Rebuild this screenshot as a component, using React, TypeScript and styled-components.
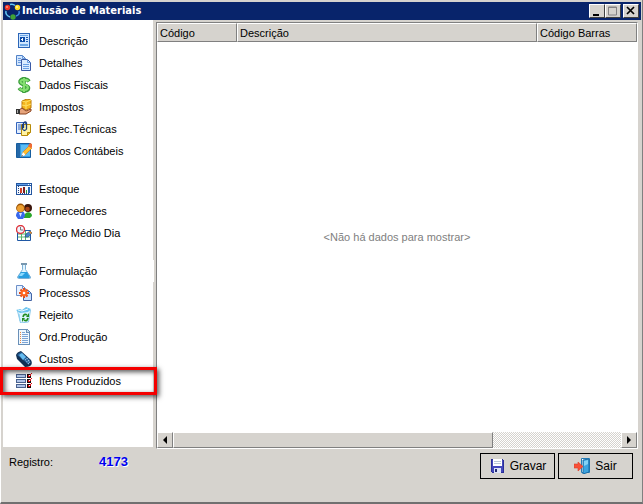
import React from "react";
import styled, { createGlobalStyle } from "styled-components";

const face = "#d6d3ce";

const GlobalStyle = createGlobalStyle`
  * { box-sizing: border-box; }
  html, body, #root { height: 100%; }
  body {
    margin: 0;
    background: ${face};
    color: #000;
    font: 11px/16px "Liberation Sans", Arial, sans-serif;
  }
`;

const Window = styled.div`
  display: flex;
  flex-direction: column;
  min-height: 100%;
  padding: 2px 1px 3px 2px;
  background: ${face};
  border-left: 1px solid #fff;
  border-right: 1px solid #808080;
  border-bottom: 2px solid #707070;
`;

const TitleBar = styled.header`
  display: flex;
  align-items: center;
  height: 18px;
  padding: 0 2px 0 1px;
  background: #08246b;
  color: #fff;
`;

const Title = styled.h1`
  flex: 1;
  margin: 0 0 0 1px;
  font: bold 11px/16px "DejaVu Sans Condensed", "DejaVu Sans", sans-serif;
`;

const WindowButton = styled.button<{ $apart?: boolean }>`
  display: flex;
  width: 16px;
  height: 14px;
  padding: 0;
  margin-left: ${(p) => (p.$apart ? 2 : 0)}px;
  align-items: center;
  justify-content: center;
  background: ${face};
  border: 1px solid;
  border-color: #fff #404040 #404040 #fff;
`;

const Body = styled.main`
  flex: 1;
  display: flex;
  gap: 3px;
  padding-right: 3px;
`;

const Sidebar = styled.nav`
  flex: 0 0 150px;
  margin-bottom: 2px;
  padding-top: 10px;
  background: #fff;
`;

const Group = styled.ul`
  list-style: none;
  margin: 0 0 16px;
  padding: 0;
`;

const Item = styled.li<{ $marked?: boolean; $edge?: boolean }>`
  position: relative;
  height: 22px;
  box-shadow: ${(p) => (p.$edge ? "1px 0 #fff" : "none")};
  ${(p) =>
    p.$marked &&
    `&::after {
      content: "";
      position: absolute;
      inset: -3px -4px -3px -3px;
      border: 3px solid #f40000;
      box-shadow: 2px 2px 5px #000a, inset 2px 2px 5px #000a;
      pointer-events: none;
    }`}
`;

const ItemLink = styled.a`
  display: flex;
  align-items: center;
  height: 22px;
  gap: 7px;
  padding-left: 13px;
  color: #000;
  text-decoration: none;
  white-space: nowrap;
`;

const Grid = styled.section`
  flex: 1;
  min-width: 0;
  display: flex;
  flex-direction: column;
  margin-top: 2px;
  background: #fff;
  border: 1px solid;
  border-color: #808080 #fff #fff #808080;
`;

const Table = styled.table`
  width: 100%;
  table-layout: fixed;
  border-collapse: separate;
  border-spacing: 0;
`;

const HeadCell = styled.th<{ $width?: number }>`
  width: ${(p) => (p.$width ? `${p.$width}px` : "auto")};
  height: 19px;
  padding: 1px 2px 0;
  background: ${face};
  border: 1px solid;
  border-color: #fff #808080 #808080 #fff;
  font-weight: normal;
  text-align: left;
  white-space: nowrap;
`;

const Empty = styled.p`
  flex: 1;
  display: flex;
  align-items: center;
  justify-content: center;
  margin: 0;
  color: #808080;
`;

const ScrollBar = styled.div`
  display: flex;
  height: 16px;
  background: repeating-conic-gradient(#fff 0 25%, ${face} 0 50%) 0 0 / 2px 2px;
`;

const ScrollButton = styled.button`
  width: 16px;
  padding: 0;
  display: flex;
  align-items: center;
  justify-content: center;
  background: ${face};
  border: 1px solid;
  border-color: #fff #808080 #808080 #fff;
`;

const Track = styled.div`
  flex: 1;
`;

const Thumb = styled.div`
  width: 71.5%;
  height: 100%;
  background: ${face};
  border: 1px solid;
  border-color: #fff #808080 #808080 #fff;
`;

const Footer = styled.footer`
  display: flex;
  height: 50px;
  padding: 4px 8px 0 6px;
`;

const RecordLabel = styled.label`
  width: 90px;
  padding-top: 1px;
`;

const RecordNumber = styled.output`
  flex: 1;
  padding-top: 1px;
  color: #0000f0;
  font-size: 13px;
  font-weight: bold;
  text-shadow: 1px 1px #fff;
`;

const Actions = styled.div`
  display: flex;
  gap: 3px;
`;

const ActionButton = styled.button`
  display: flex;
  align-items: center;
  justify-content: center;
  gap: 5px;
  width: 75px;
  height: 26px;
  padding: 0;
  background: ${face};
  border: 1px solid #000;
  color: #000;
  font: 12px/16px "Liberation Sans", Arial, sans-serif;
`;

const Svg = ({ children }: { children: React.ReactNode }) => (
  <svg width="16" height="16" viewBox="0 0 16 16" aria-hidden="true">
    {children}
  </svg>
);

const icons: Record<string, React.ReactNode> = {
  doc: (
    <g shapeRendering="crispEdges">
      <path d="M2 0h12v15H2z" fill="#2c66b8" />
      <path d="M3 1h10v13H3z" fill="#cfe6ff" />
      <path d="M4 2h8v1H4zM4 11h8v1H4zM4 13h8v-1H4z" fill="#6ea8e6" />
      <path d="M4 4h5v5H4z" fill="#0d4ca8" />
      <path d="M5 6h2v1H5zM6 5h1v3H6z" fill="#fff" />
      <path d="M10 4h2v1h-2zM10 6h2v1h-2zM10 8h2v1h-2z" fill="#1d5cb4" />
    </g>
  ),
  copy: (
    <>
      <path d="M.5.5h6l3 3v7h-9z" fill="#d2e6ff" stroke="#5282c6" />
      <path d="M6.5.5v3h3M2 3.5h3M2 5.5h4M2 7.5h4" fill="none" stroke="#6c9cdc" />
      <path d="M5.5 4.5h6l3 3v8h-9z" fill="#dcecff" stroke="#3c5aa4" />
      <path d="M11.5 4.5v3h3M7 9.500h6M7 11.500h6M7 13.500h6" fill="none" stroke="#6ca0e4" />
    </>
  ),
  money: (
    <g fill="none">
      <path d="M8 0v16M13 4.500C11 1 3.500 1.500 4 5s8.500 2.500 8.500 6-7 3.500-9.500 0" stroke="#3c9e3c" strokeWidth="3.600" />
      <path d="M8 1v14M12.500 4C10 2 4 2.500 4.500 5s7.500 2.500 7.500 5.500-6 3.500-8.500 1" stroke="#84e070" strokeWidth="2" />
    </g>
  ),
  tax: (
    <>
      <path d="M6 2l5-2 4 1v8l-5 2-4-2z" fill="#f5b51c" stroke="#b87808" />
      <path d="M6 2l4 1 5-2M10 3v7M6 6l4 1 5-2" stroke="#ffe264" fill="none" />
      <path d="M3 11l3-2 4 3 5-2v2l-5 3H3z" fill="#e6a47c" stroke="#8c4420" />
      <path d="M0 10h4v5H0z" fill="#343434" />
      <path d="M1 11h1v3H1z" fill="#aaa" />
    </>
  ),
  spec: (
    <>
      <path d="M.5 1.500h9v11h-9z" fill="#e0edff" stroke="#3464bc" />
      <path d="M2 4h3M2 6h3M2 8h3" stroke="#3464bc" />
      <path d="M5.500 3.500h9v8l-3 3h-6z" fill="#fff4a4" stroke="#b68a08" />
      <path d="M11.500 14.500v-3h3" fill="#e8bd20" stroke="#b68a08" />
      <path d="M6.500 3v5q2 3 4 0V2q-1-2-3 0v5" fill="none" stroke="#183c80" strokeWidth="1.300" />
    </>
  ),
  book: (
    <>
      <path d="M.5.500h14v14H.500z" fill="#2f9ce6" stroke="#165d9e" />
      <path d="M1 1h3v13H1z" fill="#2468a8" />
      <path d="M5 2h9v11H5z" fill="#5cbcf2" />
      <path d="M6 13l1-4 6-6 3 2-7 7z" fill="#ffc02c" stroke="#d87412" strokeWidth=".6" />
      <path d="M12 3l2-3 2 1v3l-1 1z" fill="#f06a34" />
      <path d="M5 14l2-5 2.500 3z" fill="#fff" />
      <path d="M5 14l1-2 1 1z" fill="#303030" />
    </>
  ),
  stock: (
    <g shapeRendering="crispEdges">
      <path d="M0 2h16v12H0z" fill="#2456a0" />
      <path d="M1 5h14v8H1z" fill="#f4f8ff" />
      <path d="M1 3h14v1H1z" fill="#5c9ce8" />
      <path d="M12 3h1v1h-1zM14 3h1v1h-1z" fill="#fff" />
      <path d="M2 5h1v1H2zM2 7h1v1H2zM2 9h1v1H2zM2 11h1v1H2zM4 12h1v1H4zM6 12h1v1H6zM8 12h1v1H8zM10 12h1v1h-1zM12 12h1v1h-1z" fill="#244078" />
      <path d="M4 7h2v5H4z" fill="#d84024" />
      <path d="M7 6h2v6H7z" fill="#7c2020" />
      <path d="M10 9h1v3h-1z" fill="#309c34" />
      <path d="M12 6h2v6h-2z" fill="#2464b4" />
    </g>
  ),
  people: (
    <>
      <path d="M8 14c0-6 8-6 8-1l-2 2H8z" fill="#2aa72a" />
      <circle cx="12" cy="5" r="4" fill="#3c160c" />
      <circle cx="11.500" cy="6" r="2.300" fill="#a84418" />
      <path d="M0 13c0-7 9-7 9 0l-2 3H2z" fill="#3868ec" />
      <path d="M3 10l1.500 4L6 10z" fill="#d8e6ff" />
      <circle cx="4.500" cy="5" r="4.400" fill="#9a5204" />
      <circle cx="4.500" cy="5.500" r="3.500" fill="#eda032" />
    </>
  ),
  price: (
    <>
      <path d="M1.500 5.500h13v10h-13z" fill="#fff" stroke="#2058a4" />
      <path d="M2 9h12M2 12h12M5.500 6v9M9.500 6v9" stroke="#58b46c" />
      <circle cx="4.500" cy="4.500" r="4" fill="#eef5ff" stroke="#e0363c" strokeWidth="1.400" />
      <path d="M4.500 2v3H7" fill="none" stroke="#777" />
      <path d="M9 12l1-3 4-3 2 2-4 4z" fill="#4784cc" stroke="#1e4978" strokeWidth=".6" />
      <path d="M13 7l1-1 2 2-1 1z" fill="#f08b22" />
    </>
  ),
  flask: (
    <>
      <path d="M6.500 1.500v5L1.500 14q0 1.500 1 1.500h11q1.500 0 1-1.500l-5-7.500v-5" fill="#e2f5ff" stroke="#7db0d6" />
      <path d="M5 9h6l3 5q0 1-1 1H3q-1 0-1-1z" fill="#299ee0" />
      <path d="M5 10h4l-3 3H3z" fill="#8cdaff" />
      <path d="M5 1h6" stroke="#7897af" strokeWidth="2" />
    </>
  ),
  process: (
    <>
      <path d="M.5.5h6l3 3v7h-9z" fill="#e8f2ff" stroke="#6d8fc8" />
      <path d="M7.500 5.500h5l3 3v7h-8z" fill="#cae1ff" stroke="#4464a4" />
      <path d="M6.500.500v3h3M12.500 5.500v3h3" fill="none" stroke="#6c90cb" />
      <path d="M8 3v10M3 8h10M4.500 4.500l7 7M11.500 4.500l-7 7" stroke="#e04c18" strokeWidth="2" />
      <circle cx="8" cy="8" r="3.500" fill="#ff6520" />
      <circle cx="8" cy="8" r="1.300" fill="#fff" />
    </>
  ),
  recycle: (
    <>
      <path d="M1.500 4l13-1-2 12-8 1z" fill="#dcf4ff" stroke="#8ccaec" />
      <path d="M0 3l4-1 2 1 4-3 5 2-3 3-8 1z" fill="#6cc4f0" />
      <path d="M2 3l4 1 6-2" fill="none" stroke="#e8f8ff" />
      <path d="M3 7l1 7" stroke="#8cd0f0" />
      <path d="M7 10q1-4 4-2M12 11q-1 4-4 2" fill="none" stroke="#218c20" strokeWidth="1.700" />
      <path d="M10 10h3V6zM9 11H6v4z" fill="#218c20" />
    </>
  ),
  order: (
    <g shapeRendering="crispEdges">
      <path d="M2 0h9l3 3v13H2z" fill="#6a90b8" />
      <path d="M3 1h7v3h3v11H3z" fill="#f0f8ff" />
      <path d="M11 1v2h2z" fill="#c6dcf0" />
      <path d="M6 3h3v1H6zM6 5h6v1H6zM6 7h6v1H6zM6 9h6v1H6zM6 11h6v1H6zM6 13h6v1H6z" fill="#7ca4d6" />
      <path d="M4 3h1v1H4zM4 5h1v1H4zM4 7h1v1H4zM4 9h1v1H4zM4 11h1v1H4zM4 13h1v1H4z" fill="#ed853a" />
    </g>
  ),
  phone: (
    <>
      <path d="M0 4q1-3 5-4l10 9q2 4-1 6-2 1-5 1L1 8z" fill="#103054" />
      <path d="M1 4q2-2 4-3l9 8q1 3-2 4z" fill="#265e96" />
      <path d="M3 4l3-2 4 4-3 3z" fill="#66bcf0" />
      <path d="M9 9l3-2M10.500 11l3-2M12 13l2-2" stroke="#a6d2f0" strokeWidth="1.200" strokeDasharray="1 1" />
    </>
  ),
  items: (
    <g shapeRendering="crispEdges">
      <path d="M0 1h10v4H0zM0 6h10v4H0zM0 11h10v4H0z" fill="#4a628e" />
      <path d="M1 2h8v2H1zM1 7h8v2H1zM1 12h8v2H1z" fill="#b0c4e8" />
      <path d="M11 1h4v4h-4zM11 6h4v4h-4zM11 11h4v4h-4z" fill="#180808" />
      <path d="M12 2h2v2h-2zM12 7h2v2h-2zM12 12h2v2h-2z" fill="#fff" />
      <path d="M12 2h1v2h-1zM13 3h1v1h-1zM14 1h1v2h-1zM15 0h1v1h-1zM12 7h1v2h-1zM13 8h1v1h-1zM14 6h1v2h-1zM15 5h1v1h-1zM12 12h1v2h-1zM13 13h1v1h-1zM14 11h1v2h-1zM15 10h1v1h-1z" fill="#e01018" />
    </g>
  ),
  save: (
    <g shapeRendering="crispEdges">
      <path d="M2 1h12v1h1v13H3v-1H2z" fill="#2a2e98" />
      <path d="M3 2h11v12H3z" fill="#4448bc" />
      <path d="M4 1h9v7H4z" fill="#fff" />
      <path d="M5 3h7v1H5zM5 5h7v1H5z" fill="#bac8d8" />
      <path d="M5 10h7v5H5z" fill="#dce2f6" />
      <path d="M6 11h2v3H6z" fill="#242b72" />
    </g>
  ),
  exit: (
    <>
      <path d="M7.500.500h8v14h-8z" fill="#fff" stroke="#247bb4" />
      <path d="M9 2l6-1v13l-6 2z" fill="#3ca4e0" stroke="#1c6ca5" />
      <path d="M10 3l4-1v4l-4 2z" fill="#84d2f5" />
      <path d="M0 6h4V4l5 4.500L4 13v-3H0z" fill="#f85038" stroke="#d83c28" strokeWidth=".6" />
    </>
  ),
};

const groups = [
  [
    ["doc", "Descrição"],
    ["copy", "Detalhes"],
    ["money", "Dados Fiscais"],
    ["tax", "Impostos"],
    ["spec", "Espec.Técnicas"],
    ["book", "Dados Contábeis"],
  ],
  [
    ["stock", "Estoque"],
    ["people", "Fornecedores"],
    ["price", "Preço Médio Dia"],
  ],
  [
    ["flask", "Formulação"],
    ["process", "Processos"],
    ["recycle", "Rejeito"],
    ["order", "Ord.Produção"],
    ["phone", "Custos"],
    ["items", "Itens Produzidos"],
  ],
];

const Logo = () => (
  <svg width="17" height="17" viewBox="0 0 17 17" aria-hidden="true">
    <g fill="none" strokeWidth="1.500">
      <path d="M6 1.500q3-1 5 1" stroke="#64c8f4" />
      <path d="M15 8q1 4-3 5" stroke="#3c8ce4" />
      <path d="M6 14Q1 12 2 8" stroke="#64c8f4" />
    </g>
    <circle cx="3.500" cy="4.500" r="2.700" fill="#f03424" />
    <circle cx="13.500" cy="4.500" r="2.700" fill="#ffdc24" />
    <circle cx="9" cy="14" r="2.700" fill="#41a236" />
    <circle cx="3" cy="4" r="1" fill="#ff9880" />
    <circle cx="13" cy="4" r="1" fill="#fff7a8" />
  </svg>
);

export default function App() {
  return (
    <>
      <GlobalStyle />
      <Window>
        <TitleBar>
          <Logo />
          <Title>Inclusão de Materiais</Title>
          <WindowButton aria-label="Minimizar">
            <svg width="12" height="10"><path d="M2 8h6v2H2z" fill="#000" /></svg>
          </WindowButton>
          <WindowButton aria-label="Maximizar" disabled>
            <svg width="12" height="10"><path d="M1.500 1h8v8h-8zM1 1.500h9" fill="none" stroke="#848284" /></svg>
          </WindowButton>
          <WindowButton aria-label="Fechar" $apart>
            <svg width="12" height="10"><path d="M2 1l7 7M9 1l-7 7" stroke="#000" strokeWidth="1.700" /></svg>
          </WindowButton>
        </TitleBar>
        <Body>
          <Sidebar>
            {groups.map((group, i) => (
              <Group key={i}>
                {group.map(([icon, label]) => (
                  <Item key={label} $marked={icon === "items"} $edge={icon === "flask"}>
                    <ItemLink href="#">
                      <Svg>{icons[icon]}</Svg>
                      {label}
                    </ItemLink>
                  </Item>
                ))}
              </Group>
            ))}
          </Sidebar>
          <Grid>
            <Table>
              <thead>
                <tr>
                  <HeadCell $width={80}>Código</HeadCell>
                  <HeadCell $width={300}>Descrição</HeadCell>
                  <HeadCell>Código Barras</HeadCell>
                </tr>
              </thead>
            </Table>
            <Empty>&lt;Não há dados para mostrar&gt;</Empty>
            <ScrollBar>
              <ScrollButton aria-label="Rolar para a esquerda">
                <svg width="6" height="8"><path d="M5 0v8L1 4z" /></svg>
              </ScrollButton>
              <Track><Thumb /></Track>
              <ScrollButton aria-label="Rolar para a direita">
                <svg width="6" height="8"><path d="M1 0v8l4-4z" /></svg>
              </ScrollButton>
            </ScrollBar>
          </Grid>
        </Body>
        <Footer>
          <RecordLabel htmlFor="registro">Registro:</RecordLabel>
          <RecordNumber id="registro">4173</RecordNumber>
          <Actions>
            <ActionButton><Svg>{icons.save}</Svg>Gravar</ActionButton>
            <ActionButton><Svg>{icons.exit}</Svg>Sair</ActionButton>
          </Actions>
        </Footer>
      </Window>
    </>
  );
}
